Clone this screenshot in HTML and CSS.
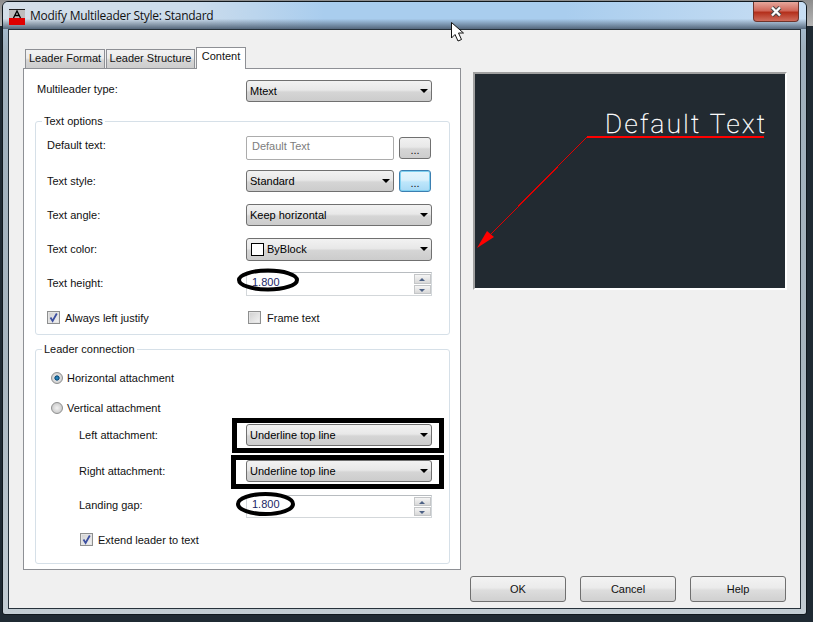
FILE: index.html
```html
<!DOCTYPE html>
<html lang="en">
<head>
  <meta charset="UTF-8">
  <title>Modify Multileader Style: Standard</title>
  <link rel="stylesheet" href="styles.css">
</head>
<body>
  <div class="backdrop-top"></div>

  <div class="window">
    <div class="titlebar">
      <svg class="app-icon" width="16" height="16" viewBox="0 0 16 16">
        <rect width="16" height="9" fill="#bdbdbd"/>
        <rect y="9" width="16" height="7" fill="#e00000"/>
        <path d="M0 .5H16" stroke="#222"/>
        <path d="M4.5 9 8 2l3.5 7M6 6.5h4" fill="none" stroke="#000" stroke-width="1.3"/>
      </svg>
      <span class="title-text">Modify Multileader Style: Standard</span>
      <div class="close-btn">
        <svg width="14" height="11" viewBox="0 0 14 11">
          <path d="M3 1.5 11 9.5M11 1.5 3 9.5" stroke="#4a4a4a" stroke-width="4.4"/>
          <path d="M3 1.5 11 9.5M11 1.5 3 9.5" stroke="#fff" stroke-width="2.4"/>
        </svg>
      </div>
    </div>

    <div class="client">
      <div class="main">
        <div class="tabs">
          <div class="tab-strip">
            <div class="tab tab-format">Leader Format</div>
            <div class="tab tab-structure">Leader Structure</div>
            <div class="tab tab-active">Content</div>
          </div>
          <div class="panel">
            <div class="type-row">
              <span class="label">Multileader type:</span>
              <div class="combo">Mtext</div>
            </div>

            <div class="group group-text">
              <span class="group-title">Text options</span>
              <div class="form-row">
                <span class="label label-raised">Default text:</span>
                <div class="field-pair">
                  <div class="input">Default Text</div>
                  <div class="dots-btn"><span>...</span></div>
                </div>
              </div>
              <div class="form-row">
                <span class="label">Text style:</span>
                <div class="field-pair">
                  <div class="combo">Standard</div>
                  <div class="dots-btn dots-focus"><span>...</span></div>
                </div>
              </div>
              <div class="form-row">
                <span class="label">Text angle:</span>
                <div class="combo">Keep horizontal</div>
              </div>
              <div class="form-row">
                <span class="label label-up">Text color:</span>
                <div class="combo combo-color"><i class="swatch"></i><span class="color-name">ByBlock</span></div>
              </div>
              <div class="form-row">
                <span class="label label-up">Text height:</span>
                <div class="spin">
                  <span>1.800</span>
                  <div class="spin-btns"><i class="spin-up"></i><i class="spin-down"></i></div>
                </div>
              </div>
              <div class="form-row">
                <label class="check">
                  <i class="box">
                    <svg width="11" height="11" viewBox="0 0 11 11"><path d="M2.5 5.5 4.6 9 8.8 1.5" fill="none" stroke="#3c4fa0" stroke-width="1.8"/></svg>
                  </i>
                  Always left justify
                </label>
                <label class="check check-frame"><i class="box"></i>Frame text</label>
              </div>
            </div>

            <div class="group group-leader">
              <span class="group-title">Leader connection</span>
              <div class="form-row radio-row">
                <label class="radio"><i class="dot dot-on"></i>Horizontal attachment</label>
              </div>
              <div class="form-row radio-row">
                <label class="radio"><i class="dot"></i>Vertical attachment</label>
              </div>
              <div class="form-row sub-row">
                <span class="label">Left attachment:</span>
                <div class="combo">Underline top line</div>
              </div>
              <div class="form-row sub-row">
                <span class="label">Right attachment:</span>
                <div class="combo">Underline top line</div>
              </div>
              <div class="form-row sub-row">
                <span class="label label-gap">Landing gap:</span>
                <div class="spin spin-short">
                  <span>1.800</span>
                  <div class="spin-btns"><i class="spin-up"></i><i class="spin-down"></i></div>
                </div>
              </div>
              <div class="form-row sub-row">
                <label class="check check-extend">
                  <i class="box">
                    <svg width="11" height="11" viewBox="0 0 11 11"><path d="M2.5 5.5 4.6 9 8.8 1.5" fill="none" stroke="#3c4fa0" stroke-width="1.8"/></svg>
                  </i>
                  Extend leader to text
                </label>
              </div>
            </div>
          </div>
        </div>

        <div class="preview">
          <svg width="310" height="214" viewBox="475 75 310 214">
            <text class="preview-text" x="605" y="134">Default Text</text>
            <path d="M587 138H764" stroke="#f00" stroke-width="2" shape-rendering="crispEdges"/>
            <path d="M587 138 491 235" stroke="#e00000" stroke-width="1" shape-rendering="crispEdges"/>
            <path d="M477 249 487 232 494 238Z" fill="#f00"/>
          </svg>
        </div>
      </div>

      <div class="footer">
        <div class="btn">OK</div>
        <div class="btn">Cancel</div>
        <div class="btn">Help</div>
      </div>
    </div>
  </div>

  <!-- marker drawn on the screenshot, and the mouse pointer -->
  <svg class="markup" width="813" height="622" viewBox="0 0 813 622">
    <ellipse cx="268" cy="280" rx="29" ry="9.5" fill="none" stroke="#000" stroke-width="4"/>
    <ellipse cx="265.5" cy="504" rx="27.5" ry="10" fill="none" stroke="#000" stroke-width="4"/>
    <rect x="234.5" y="420.5" width="207" height="30" fill="none" stroke="#000" stroke-width="5"/>
    <rect x="233.5" y="457.5" width="208" height="29" fill="none" stroke="#000" stroke-width="5"/>
    <path d="M451.5 22.5V38l3.5-3.5 3 6.5 3.5-1.5-3-6.5h5Z" fill="#fff" stroke="#111" stroke-width="1"/>
  </svg>
</body>
</html>
```

FILE: styles.css
```css
html, body {
    height: 100%;
    margin: 0;
}
body {
    background: #1f2a33;
    color: #111;
    font-family: "Liberation Sans", Arial, sans-serif;
    font-size: 11px;
    overflow: hidden;
    position: relative;
}
i {
    display: block;
}

.backdrop-top {
    background: linear-gradient(#8d8d8d, #b5b5b5);
    height: 26px;
}

/* window */
.window {
    background: linear-gradient(#a9c4dc, #9fb0bd 8%, #a8b6c0 60%, #c2ccd3);
    border: 1px solid #10181e;
    border-radius: 6px 6px 3px 3px;
    box-sizing: border-box;
    display: flex;
    flex-direction: column;
    height: 614px;
    left: 2px;
    padding: 0 5px 5px;
    position: absolute;
    top: 1px;
    width: 805px;
}
.titlebar {
    align-items: center;
    background:
        linear-gradient(rgba(80,98,118,0) 62%, rgba(80,98,118,.95) 100%),
        linear-gradient(to right, #d5dfe8, #cbdcec 24%, #a9cdee 40%, #a9cdee 70%, #c8def3);
    display: flex;
    height: 27px;
    margin: 0 -5px;
    padding: 0 6px;
    border-radius: 5px 5px 0 0;
}
.app-icon {
    margin-top: 3px;
}
.title-text {
    font-family: "Open Sans", sans-serif;
    font-size: 12px;
    letter-spacing: -.27px;
    margin: 0 0 0 5px;
}
.close-btn {
    align-items: center;
    align-self: flex-start;
    background: linear-gradient(#e6a79c, #d0685a 45%, #b4301c 55%, #cf6d5c);
    border: 1px solid #70352c;
    border-top: 0;
    border-radius: 0 0 4px 4px;
    box-sizing: border-box;
    display: flex;
    height: 20px;
    justify-content: center;
    margin-left: auto;
    margin-right: 1px;
    width: 46px;
}

.client {
    background: #f0f0f0;
    border: 1px solid #27323b;
    box-sizing: border-box;
    display: flex;
    flex: 1;
    flex-direction: column;
    padding: 17px 14px 6px 14px;
}
.main {
    display: flex;
    gap: 12px;
}

/* tabs */
.tab-strip {
    align-items: flex-end;
    display: flex;
    gap: 1px;
    height: 21px;
    padding-left: 2px;
}
.tab {
    background: linear-gradient(#f2f2f2, #ececec 45%, #d6d6d6 55%, #cdcdcd);
    border: 1px solid #8e9095;
    border-bottom: 0;
    box-sizing: border-box;
    color: #111;
    height: 19px;
    line-height: 16px;
    text-align: center;
}
.tab-format {
    width: 80px;
}
.tab-structure {
    width: 89px;
}
.tab-active {
    background: #fff;
    height: 22px;
    line-height: 17px;
    margin-bottom: -1px;
    position: relative;
    width: 50px;
}
.panel {
    background: #fff;
    border: 1px solid #8e9095;
    box-sizing: border-box;
    height: 502px;
    padding: 11px 10px 0 11px;
    width: 438px;
}
.type-row {
    align-items: center;
    display: grid;
    grid-template-columns: 209px 186px;
    padding-left: 2px;
}
.type-row .label {
    margin-top: -4px;
}

/* groups */
.group {
    border: 1px solid #d6e0e8;
    border-radius: 3px;
    box-sizing: border-box;
    display: grid;
    padding: 10px 16px 0 11px;
    position: relative;
    width: 415px;
}
.group-text {
    grid-template-rows: 32px 34px 34px 35px 34px 33px;
    height: 214px;
    margin-top: 19px;
}
.group-leader {
    grid-template-rows: 30px 30px 24px 48px 21px 47px;
    height: 215px;
    margin-top: 14px;
    padding-top: 13px;
}
.group-title {
    background: #fff;
    left: 6px;
    padding: 0 2px;
    position: absolute;
    top: -7px;
}
.form-row {
    align-items: center;
    display: grid;
    grid-template-columns: 199px 186px;
}
.sub-row {
    grid-template-columns: 167px 186px;
    padding-left: 32px;
}
.radio-row {
    grid-template-columns: auto;
}
.label-raised {
    margin-bottom: 6px;
}
.label-up {
    margin-bottom: 2px;
}
.label-gap {
    margin-bottom: 3px;
}

/* fields */
.combo {
    align-items: center;
    background: linear-gradient(#f2f2f2, #e8e8e8 45%, #d5d5d5 55%, #cccccc);
    border: 1px solid #707070;
    border-radius: 3px;
    box-sizing: border-box;
    color: #000;
    display: flex;
    flex: 1;
    height: 22px;
    padding-left: 3px;
    position: relative;
}
.combo::after {
    border-left: 4px solid transparent;
    border-right: 4px solid transparent;
    border-top: 4px solid #000;
    content: "";
    position: absolute;
    right: 3px;
    top: 8px;
}
.combo-color {
    height: 23px;
    padding-left: 4px;
}
.color-name {
    margin-bottom: 2px;
}
.swatch {
    background: #fff;
    border: 1px solid #000;
    height: 11px;
    margin-right: 3px;
    width: 11px;
}
.field-pair {
    align-items: center;
    display: flex;
    gap: 5px;
    padding-right: 1px;
}
.input {
    background: #fff;
    border: 1px solid #acacac;
    border-radius: 2px;
    box-sizing: border-box;
    color: #7d7d7d;
    flex: 1;
    height: 24px;
    line-height: 19px;
    padding-left: 5px;
}
.dots-btn {
    background: linear-gradient(#f1f1f1, #e8e8e8 45%, #d6d6d6 55%, #cdcdcd);
    border: 1px solid #707070;
    border-radius: 3px;
    box-sizing: border-box;
    flex: none;
    height: 22px;
    line-height: 24px;
    text-align: center;
    width: 32px;
}
.dots-focus {
    background: linear-gradient(#e6f5fc, #d9f0fb 45%, #bee6fb 55%, #a7d9f5);
    border-color: #3c7fb1;
    box-shadow: inset 0 0 0 1px #7fd0f0;
}
.spin {
    border: 1px solid #d3d7da;
    border-top-color: #b8bcc0;
    box-sizing: border-box;
    color: #1a1f66;
    display: flex;
    height: 24px;
    justify-content: space-between;
    line-height: 19px;
    padding-left: 5px;
}
.spin-short {
    height: 23px;
    line-height: 16px;
}
.spin-btns {
    display: flex;
    flex-direction: column;
    gap: 1px;
    padding: 1px 0;
}
.spin-up, .spin-down {
    background: linear-gradient(#f5f5f5, #d8d8d8);
    border: 1px solid #c4c6c8;
    box-sizing: border-box;
    flex: 1;
    position: relative;
    width: 17px;
}
.spin-up::after, .spin-down::after {
    border-left: 3px solid transparent;
    border-right: 3px solid transparent;
    content: "";
    left: 4px;
    position: absolute;
    top: 3px;
}
.spin-up::after {
    border-bottom: 3px solid #4d6185;
}
.spin-down::after {
    border-top: 3px solid #4d6185;
}

/* checks and radios */
.check, .radio {
    align-items: center;
    display: flex;
}
.box {
    background: linear-gradient(135deg, #cfcfcf, #f4f4f4);
    border: 1px solid #8e8f8f;
    box-shadow: inset 0 0 0 1px #e4e4e4;
    box-sizing: border-box;
    height: 13px;
    margin-right: 5px;
    width: 13px;
}
.box svg {
    display: block;
    margin: 0;
}
.check-frame {
    margin-left: 2px;
}
.check-frame .box {
    margin-right: 6px;
}
.check-extend {
    margin-left: 1px;
}
.radio {
    padding-left: 4px;
}
.dot {
    background: radial-gradient(circle, #f2f2f2, #bdbdbd);
    border: 1px solid #8e8f8f;
    border-radius: 50%;
    box-sizing: border-box;
    height: 12px;
    margin-right: 4px;
    width: 12px;
}
.dot-on {
    background: radial-gradient(circle, #2f9bd6 0, #0c4a78 32%, #e0e0e0 42%, #bdbdbd 100%);
}

/* preview pane */
.preview {
    background: #222a31;
    border: 2px solid;
    border-color: #a0a0a0 #fff #fff #a0a0a0;
    height: 214px;
    margin-top: 25px;
    width: 310px;
}
.preview svg {
    display: block;
}
.preview-text {
    fill: #fff;
    stroke: #fff;
    stroke-width: .4px;
    font-family: Roboto, sans-serif;
    font-size: 26px;
    font-weight: 100;
    letter-spacing: 2.4px;
}

/* buttons */
.footer {
    display: flex;
    gap: 14px;
    justify-content: flex-end;
    margin-top: 6px;
}
.btn {
    background: linear-gradient(#f3f3f3, #ebebeb 45%, #dddddd 55%, #d0d0d0);
    border: 1px solid #707070;
    border-radius: 3px;
    box-sizing: border-box;
    height: 26px;
    line-height: 25px;
    text-align: center;
    width: 96px;
}

.markup {
    left: 0;
    pointer-events: none;
    position: absolute;
    top: 0;
}
```
